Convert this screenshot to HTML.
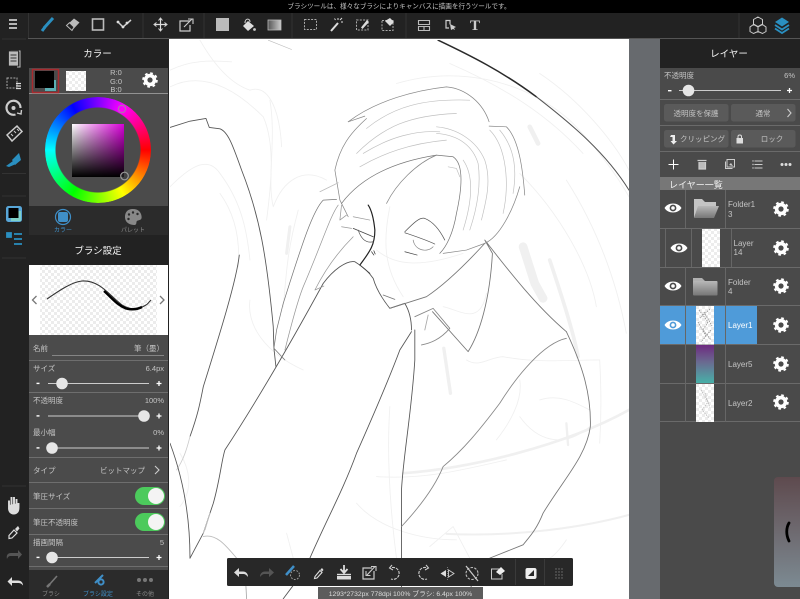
<!DOCTYPE html>
<html lang="ja"><head><meta charset="utf-8"><title>MediBang</title>
<style>
html,body{margin:0;padding:0;background:#222;width:800px;height:599px;overflow:hidden}
#s{position:absolute;left:0;top:0}
#wheel{position:absolute;left:45px;top:97px;width:106px;height:106px;border-radius:50%;background:conic-gradient(from 90deg,#f00,#ff0,#0f0,#0ff,#00f,#f0f,#f00);-webkit-mask:radial-gradient(circle,transparent 42px,#000 43px);mask:radial-gradient(circle,transparent 42px,#000 43px)}
#sq{position:absolute;left:72px;top:124px;width:52px;height:53px;background:linear-gradient(to bottom,rgba(0,0,0,0),#000),linear-gradient(to right,#fff,#d800d8)}
#o{position:absolute;left:0;top:0}
text{font-family:"Liberation Sans","Noto Sans CJK JP",sans-serif;fill:#c4c4c4;font-size:7.5px}
.sk{filter:blur(.3px)}
</style></head><body>
<svg id="s" width="800" height="599" viewBox="0 0 800 599" xmlns="http://www.w3.org/2000/svg">
<defs>
<pattern id="ck" width="6" height="6" patternUnits="userSpaceOnUse"><rect width="6" height="6" fill="#fff"/><rect width="3" height="3" fill="#ececec"/><rect x="3" y="3" width="3" height="3" fill="#ececec"/></pattern>
<linearGradient id="l5" x1="0" y1="0" x2="0" y2="1"><stop offset="0" stop-color="#6e2a80"/><stop offset=".45" stop-color="#6a6a90"/><stop offset="1" stop-color="#48b0a8"/></linearGradient>
<linearGradient id="gr" x1="0" y1="0" x2="1" y2="0"><stop offset="0" stop-color="#555"/><stop offset="1" stop-color="#ccc"/></linearGradient>
<linearGradient id="fold" x1="0" y1="0" x2="0" y2="1"><stop offset="0" stop-color="#b8b8b8"/><stop offset="1" stop-color="#777"/></linearGradient>
<linearGradient id="pv" x1="0" y1="0" x2="0" y2="1"><stop offset="0" stop-color="#5e4a4e"/><stop offset=".5" stop-color="#6e6a70"/><stop offset="1" stop-color="#7c8a92"/></linearGradient>
<g id="gear"><circle r="4.4" fill="none" stroke="#fff" stroke-width="3.6"/><circle r="6.6" fill="none" stroke="#fff" stroke-width="2.4" stroke-dasharray="2.59 2.59"/></g>
<g id="eye"><path d="M-8.5 0C-5 -6 5 -6 8.5 0C5 6 -5 6 -8.5 0Z" fill="#fff"/><circle r="3.4" fill="#4a4a4a"/><circle r="1.8" fill="#fff"/></g>
<g id="eyeb"><path d="M-8.5 0C-5 -6 5 -6 8.5 0C5 6 -5 6 -8.5 0Z" fill="#fff"/><circle r="3.4" fill="#4f9bd9"/><circle r="1.8" fill="#fff"/></g>
<g id="folder"><path d="M-12 -10H-4L-1 -7H10V-2H-8L-12 9Z" fill="#c4c4c4"/><path d="M-8 -3H13L8 9H-12Z" fill="url(#fold)"/></g>
</defs>

<!-- base -->
<rect width="800" height="599" fill="#222"/>
<rect width="800" height="13" fill="#000"/>
<text x="399" y="8.6" text-anchor="middle" style="font-size:6.6px" fill="#bbb">ブラシツールは、様々なブラシによりキャンバスに描画を行うツールです。</text>
<rect y="13" width="800" height="25" fill="#222"/>
<rect y="38" x="28" width="772" height="1" fill="#555"/>

<!-- canvas -->
<rect x="169" y="39" width="460" height="560" fill="#fff"/>
<rect x="629" y="39" width="31" height="560" fill="#676a6e"/>
<svg x="170" y="40" width="459" height="559" viewBox="0 0 1378 1677" fill="none" stroke-linecap="round" stroke-linejoin="round">
 <g class="sk">
 <g stroke="#f0f0f0" stroke-width="2.6">
  <path d="M90 0C130 70 180 130 240 150C300 130 330 220 335 320"/>
  <path d="M0 90C60 60 120 60 185 65"/>
  <path d="M0 140C100 90 200 150 280 230C320 320 300 460 290 540"/>
  <path d="M0 440C50 390 110 340 150 400C210 480 230 560 240 660"/>
  <path d="M150 460C200 530 210 610 205 680"/>
  <path d="M300 180C320 300 290 420 310 500C340 420 400 380 470 420"/>
  <path d="M240 780C230 860 290 940 400 990"/>
  <path d="M385 510C350 640 350 700 340 800"/>
  <path d="M680 130C850 80 1050 110 1200 240C1290 330 1350 420 1378 470"/>
  <path d="M840 70C1000 140 1130 220 1240 340"/>
  <path d="M1110 100C1230 180 1330 300 1378 390"/>
  <path d="M1050 400C1170 520 1260 680 1280 800"/>
  <path d="M1190 420C1280 560 1340 720 1370 880"/>
  <path d="M1290 960C1295 1050 1295 1130 1290 1210"/>
  <path d="M620 1310C760 1320 880 1290 1010 1260"/>
  <path d="M560 1390C620 1460 740 1500 860 1500"/>
  <path d="M660 1100C650 1250 660 1400 680 1555"/>
  <path d="M1050 1020C1060 1080 1020 1150 980 1200"/>
  <path d="M1110 1080C1170 1060 1220 1090 1260 1110"/>
  <path d="M890 960C930 985 960 950 1000 950C1100 970 1200 960 1290 960"/>
  <path d="M780 1520L850 1460L900 1555M1190 1500C1170 1530 1150 1550 1140 1555"/>
  <path d="M350 1480L370 1555M1050 1130C1100 1200 1180 1230 1260 1160"/>
  <path d="M30 1240C60 1290 70 1350 30 1400M660 500C640 600 640 680 700 770"/>
  <path d="M620 630C680 680 760 680 880 640"/>
  <path d="M820 800C870 810 930 860 950 760"/>
 </g>
 <g stroke="#f0f0f0" fill="none">
  <path d="M1060 620L1095 730L1120 775" stroke-width="26"/>
  <path d="M1140 660C1170 750 1210 870 1225 950" stroke-width="11"/>
  <path d="M1080 260L1105 310" stroke-width="14"/>
  <path d="M822 925L842 1060" stroke-width="10"/>
  <path d="M360 560L350 640" stroke-width="9"/>
  <path d="M700 1300C900 1285 1180 1220 1378 1110" stroke-width="8"/>
  <path d="M830 1482C1050 1492 1250 1460 1378 1425" stroke-width="6"/>
  <path d="M1190 1150L1195 1215" stroke-width="7"/>
 </g>
 <!-- top arc -->
 <path d="M805 0C900 45 1000 95 1100 170" stroke="#2a2a2a" stroke-width="4.5"/>
 <path d="M1100 170C1210 255 1310 340 1378 450" stroke="#555" stroke-width="3"/>
 <path d="M295 0L365 28" stroke="#bbb" stroke-width="1.8"/>
 <!-- left figure -->
 <g stroke="#777" stroke-width="2.6">
  <path d="M0 262L60 243L108 235L118 262L150 266C175 275 190 320 215 390C270 530 290 650 310 860L312 925L318 980" stroke="#555"/>
  <path d="M208 645C200 720 150 880 100 1040C90 1090 85 1120 60 1190" stroke="#555"/>
  <path d="M60 1190C50 1230 40 1260 20 1290" stroke="#ccc"/>
  <path d="M0 1210C30 1290 60 1400 60 1555" stroke="#555"/>
  <path d="M60 1555L100 1480L130 1390C150 1320 155 1260 165 1230C250 1100 340 950 460 730C490 690 530 660 555 665C580 680 600 700 610 715C620 750 640 780 660 805L705 790C720 815 725 840 725 870" stroke="#555"/>
  <path d="M725 875L690 930C660 1010 600 1150 560 1240C520 1350 470 1440 420 1555L369 1638L340 1677" stroke="#555"/>
  <path d="M735 870L735 960C725 1120 700 1250 695 1350L695 1677" stroke="#555"/>
  <path d="M788 815L895 935C930 880 960 780 968 640L945 600C1000 670 1090 790 1190 875"/>
  <path d="M1190 875C1230 960 1265 1050 1262 1160C1250 1250 1180 1320 1120 1420C1100 1470 1080 1490 1060 1515L960 1555L880 1677"/>
  <path d="M695 1460C760 1390 800 1330 820 1280C880 1230 930 1170 990 1090C1040 1010 1120 910 1190 895" stroke="#888"/>
  <path d="M735 830L790 805L840 865C810 900 780 910 755 915" stroke="#888"/>
  <path d="M775 825L765 870" stroke="#aaa"/>
  <path d="M660 805L770 770C830 730 890 670 945 610"/>
  <path d="M640 765L675 778"/>
  <path d="M100 1480L120 1420L105 1470" stroke="#bbb"/>
  <path d="M100 1490C140 1480 170 1520 200 1555" stroke="#bbb"/>
  <path d="M228 1640L230 1677" stroke="#aaa"/>
 </g>
 <!-- face -->
 <path d="M570 675C595 640 615 620 615 570C612 540 605 510 595 495" stroke="#222" stroke-width="3.6"/>
 <path d="M570 675L600 700" stroke="#444" stroke-width="2.6"/>
 <g stroke="#888" stroke-width="2.2">
  <path d="M535 245C620 180 740 150 830 140C890 145 940 190 958 245"/>
  <path d="M535 245L585 228"/>
  <path d="M958 258L1010 260C1050 300 1060 400 1065 465"/>
  <path d="M590 235C540 280 510 320 495 390L510 480L535 530"/>
  <path d="M515 490C560 430 640 370 800 345L850 350C880 370 880 430 860 520C850 580 830 620 810 640" stroke="#777"/>
  <path d="M650 490C680 430 740 370 800 345"/>
  <path d="M1050 440C1030 510 990 590 945 610L890 630L820 640"/>
  <path d="M450 455L505 428" stroke="#bbb"/>
 </g>
 <g stroke="#c0c0c0" stroke-width="2">
  <path d="M590 265C670 200 760 175 900 180"/>
  <path d="M560 340C640 260 720 225 860 220"/>
  <path d="M580 340C660 290 740 270 810 275"/>
  <path d="M570 380C640 340 720 310 830 300"/>
  <path d="M800 260C860 265 920 300 945 360C965 420 950 480 935 540"/>
  <path d="M800 280C870 285 910 320 925 370C935 440 920 510 900 570"/>
  <path d="M880 360C915 410 905 490 880 570"/>
  <path d="M960 270C1010 320 1020 430 1000 520"/>
  <path d="M990 270C1040 330 1040 400 1030 460"/>
  <path d="M835 380L860 385L870 410"/>
 </g>
 <g stroke="#555" stroke-width="2.2">
  <path d="M705 575C730 550 750 530 765 535C790 545 810 570 825 600"/>
  <path d="M705 578C740 590 770 600 795 612"/>
  <path d="M730 600C735 630 770 640 790 620" stroke="#888"/>
  <path d="M705 635L742 645" stroke="#444"/>
  <path d="M550 565L610 590" stroke="#444"/>
  <path d="M565 570C575 600 590 610 610 605"/>
  <path d="M550 530L600 540M515 560L545 565" stroke="#999"/>
  <path d="M515 495L510 540L530 525" stroke="#999"/>
  <path d="M605 635L612 645M612 632L616 642" stroke="#333"/>
  <path d="M500 478L460 480C430 510 400 600 340 790L320 870L312 925L345 960" stroke="#777"/>
  <path d="M505 495C480 530 460 600 400 740C380 790 360 870 345 930" stroke="#999"/>
  <path d="M550 590C500 640 460 700 435 750L462 738" stroke="#999"/>
 </g>
 </g>
</svg>

<!-- toolbar icons -->
<g fill="none" stroke="#c8c8c8" stroke-width="1.5">
 <path d="M9 20H17M9 24H17M9 28H17" stroke="#e6e6e6" stroke-width="1.4"/>
 <path d="M28.5 13V38M143 13V38M204 13V38M292 13V38M406 13V38M739 13V38" stroke="#333" stroke-width="1"/>
 <path d="M53 18L44 28" stroke="#2a8fc0" stroke-width="3"/><path d="M42 31L45 27" stroke="#2a8fc0" stroke-width="3"/>
 <path d="M66.5 25.5L74 18.5L79.5 22.5L72 30.5Z" fill="#bbb" stroke="none"/><path d="M66.5 25.5L72 30.5L74 27L69.5 22.7Z" fill="#222" stroke="#bbb" stroke-width="1"/>
 <rect x="92.5" y="19" width="11" height="11" stroke="#bbb" stroke-width="1.6"/>
 <path d="M118 22L123 27L131 20" stroke="#d0d0d0"/><circle cx="118" cy="22" r="1.4" fill="#ddd" stroke="none"/><circle cx="123" cy="27" r="1.4" fill="#ddd" stroke="none"/><circle cx="127" cy="23" r="1.4" fill="#ddd" stroke="none"/>
 <path d="M160.5 19V30M155 24.5H166" stroke="#ddd" stroke-width="1.2"/><path d="M158.5 20.5L160.5 18L162.5 20.5M158.5 28.5L160.5 31L162.5 28.5M156.5 22.5L154 24.5L156.5 26.5M164.5 22.5L167 24.5L164.5 26.5" stroke="#ddd" stroke-width="1"/>
 <path d="M190 21H180V31H190V25" stroke="#ccc" stroke-width="1.2"/><path d="M184 27L192 19M188 19H193V24" stroke="#ccc" stroke-width="1.1"/>
 <rect x="216" y="18" width="13" height="13" fill="#bbb" stroke="none"/>
 <path d="M243 26L248 21L254 26L248 31Z" fill="#ddd" stroke="none"/><path d="M245 23C245 18 250 18 250 22" stroke="#ccc" stroke-width="1.1"/><circle cx="254.5" cy="29.5" r="1.4" fill="#ccc" stroke="none"/>
 <rect x="268" y="20" width="13" height="10" fill="url(#gr)" stroke="#bbb" stroke-width=".8"/>
 <g stroke-dasharray="2 1.3" stroke="#aaa" stroke-width="1"><rect x="304.5" y="19.5" width="12" height="10"/><path d="M356.5 20H368V30H356.5Z"/><path d="M382 20.5H393V30.5H382Z"/></g>
 <path d="M331 31L338 23" stroke="#ddd" stroke-width="2"/><path d="M338 20V18M341 22H343M340 20L342 18M335.5 20L334.5 18.5" stroke="#ddd" stroke-width="1"/>
 <path d="M361 27.5L367 20L369 22L362.5 29Z" fill="#ddd" stroke="none"/>
 <path d="M385 21L390 18L394 22L390 26Z" fill="#ddd" stroke="none"/>
 <path d="M418.5 20.5H429.5V24.5H418.5ZM418.5 26.500H429.5V30.5H418.5ZM424 26.5V30.5" stroke="#bbb" stroke-width="1.1"/>
 <path d="M450 24.5V20.5H446V28H449" stroke="#ccc" stroke-width="1.2"/><path d="M450 24L456 27L454 28L455 30L453 29L451 30Z" fill="#ccc" stroke="none"/>
 <path d="M758 18.5L762.5 21V25.5L758 28L753.5 25.5V21ZM753.5 26L758 28.5V33L753.5 35L750 33V28.5ZM762.5 26L766 28.5V33L762.5 35L758 33V28.5Z" stroke="#ccc" stroke-width="1" transform="translate(0,-1.5)"/>
</g>
<text x="475" y="30" text-anchor="middle" style="font-size:15px;font-family:'Liberation Serif',serif;font-weight:bold;fill:#ccc">T</text>
<path d="M782 17.5L789 22L782 26.5L775 22Z" fill="#2a8fc0"/><path d="M775 25L782 29.5L789 25" fill="none" stroke="#2a8fc0" stroke-width="1.8"/><path d="M775 28.5L782 33L789 28.5" fill="none" stroke="#2a8fc0" stroke-width="1.8"/>

<!-- sidebar -->
<rect x="0" y="39" width="28" height="560" fill="#222"/>
<path d="M2 39H26M2 173.5H26M2 196H26M2 258H26M2 486H26" stroke="#333" stroke-width="1"/>
<g fill="none" stroke="#c0c0c0">
 <path d="M11 54V51H20V67H17" stroke-width="1"/><rect x="8.5" y="51" width="10" height="15" fill="#bbb" stroke="#222" stroke-width=".8"/>
 <path d="M10.5 55H16.5M10.5 58H16.5M10.5 61H16.5" stroke="#333" stroke-width="1"/>
 <path d="M7 78H17V88H7Z" stroke-dasharray="2 1.2" stroke-width="1" stroke="#aaa"/><path d="M16 83.5H21M16 86H21M16 88.5H21" stroke="#ddd" stroke-width="1.2"/>
 <path d="M20.5 108A7 7 0 1 0 15.5 114.5" stroke="#ccc" stroke-width="2.2"/><circle cx="13.5" cy="108" r="2" fill="#ccc" stroke="none"/><path d="M17 113L21 114L21.5 110" stroke="#ccc" stroke-width="1.4"/>
 <path d="M7 135L17 126L22 131.5L12 141Z" stroke="#ccc" stroke-width="1.5"/><path d="M11 134L13 136M14 131L16 133M17 129L19 131" stroke="#ccc" stroke-width="1"/>
</g>
<path d="M12 160L19 153L21 160L15 165Z" fill="#2a8fc0"/><path d="M6 166L13 161L16 164L9 167Z" fill="#2a8fc0"/>
<rect x="6" y="206" width="16" height="16" rx="2.5" fill="#58a6d8"/><rect x="11" y="211" width="10" height="10" fill="#7fd0c8"/><rect x="8.5" y="208" width="10" height="10" fill="#000"/>
<path d="M7 233H11V237H7ZM14 234H22M14 239H22M14 244H22" fill="#2a8fc0" stroke="#2a8fc0" stroke-width="1.8"/>
<path d="M9 508V500.5M11.5 507V497M14 507V497M16.5 508V499M9 505L9 509C9.5 513 13 514.5 16 513C19 511.5 18.5 508 18.5 503" stroke="#ddd" stroke-width="1.9" fill="#ddd"/>
<path d="M9 535.5L14 530L17 533L12 538L9 538.5Z" fill="none" stroke="#ddd" stroke-width="1.2"/><path d="M15 529L18 526L19.5 528.5L17 531.5Z" fill="#ddd"/>
<path d="M20 553H13C10 553 8 555 9 559C10 556.5 11 556 13 556H20V559L24 554.5L20 550Z" fill="#555" transform="translate(-2,0)"/>
<path d="M8 581H14C17 581 19 583 19 586C17.5 584 16 583.5 14 583.5H8V586.5L3.5 582L8 577.5Z" fill="#e0e0e0" transform="translate(4,-.5)"/>

<!-- left panel -->
<rect x="28" y="39" width="140" height="560" fill="#222"/>
<text x="97.5" y="57" text-anchor="middle" style="font-size:9.5px;fill:#f4f4f4">カラー</text>
<rect x="29" y="68" width="139" height="138" fill="#4b4b4b"/>
<path d="M29 93.5H168" stroke="#aaa" stroke-width=".8"/>
<rect x="32.5" y="69.5" width="26" height="23" fill="none" stroke="#a82a2e" stroke-width="1.5"/>
<rect x="45" y="80" width="11" height="11" fill="#5ab0b4"/>
<rect x="35" y="71" width="19" height="17" fill="#000"/>
<rect x="66" y="71" width="20" height="20" fill="url(#ck)"/>
<text x="116" y="75" text-anchor="middle">R:0</text><text x="116" y="84" text-anchor="middle">G:0</text><text x="116" y="92" text-anchor="middle">B:0</text>
<use href="#gear" x="150" y="80"/>
<rect x="29" y="206" width="139" height="29" fill="#2b2b2b"/>
<circle cx="63" cy="217" r="7.5" fill="none" stroke="#3f8fc8" stroke-width="1.2"/><rect x="58" y="212" width="10" height="10" rx="2" fill="#3f8fc8"/>
<text x="63" y="232" text-anchor="middle" style="font-size:6px;fill:#3f8fc8">カラー</text>
<path d="M133 209C126 209 125 214 125 217C125 222 129 225 134 225C138 225 135 221 138 220.5C141 220 142 219 141.5 216C141 212 138 209 133 209Z" fill="#888"/>
<g fill="#2b2b2b"><circle cx="129" cy="214.5" r="1.2"/><circle cx="133" cy="212.5" r="1.2"/><circle cx="137.5" cy="214" r="1.2"/><circle cx="128.5" cy="219" r="1.2"/></g>
<text x="133" y="232" text-anchor="middle" style="font-size:6px;fill:#888">パレット</text>

<text x="98" y="254" text-anchor="middle" style="font-size:9.5px;fill:#f4f4f4">ブラシ設定</text>
<rect x="29" y="265" width="139" height="70" fill="#fff"/>
<rect x="40" y="265" width="117" height="70" fill="url(#ck)"/>
<path d="M47 299C60 290 72 282 82 281C100 280 110 296 122 305C130 310 138 310 146 305C148 304 148 303 151 300" fill="none" stroke="#333" stroke-width="1.1"/>
<path d="M104 291C112 298 117 305 126 308.500C132 310 138 309 142 307" fill="none" stroke="#000" stroke-width="2.4"/>
<path d="M36.500 296L32.500 300L36.500 304" fill="none" stroke="#777" stroke-width="1.3"/>
<path d="M160 296L164 300L160 304" fill="none" stroke="#777" stroke-width="1.3"/>
<rect x="29" y="335" width="139" height="235" fill="#4b4b4b"/>
<text x="33" y="351">名前</text><text x="164" y="351" text-anchor="end">筆（墨）</text>
<path d="M52 355.5H164" stroke="#999" stroke-width=".8"/>
<path d="M29 360.5H168M29 392.5H168M29 457.5H168M29 482.5H168M29 508.5H168M29 534.5H168M29 566.5H168" stroke="#6e6e6e" stroke-width="1"/>

<text x="33" y="371">サイズ</text><text x="164" y="371" text-anchor="end">6.4px</text>
<path d="M48 383.5H149" stroke="#ccc" stroke-width="1"/><circle cx="62" cy="383.5" r="5.8" fill="#e6e6e6"/>
<text x="33" y="403">不透明度</text><text x="164" y="403" text-anchor="end">100%</text>
<path d="M48 416H149" stroke="#ccc" stroke-width="1"/><circle cx="144" cy="416" r="5.8" fill="#e6e6e6"/>
<text x="33" y="435">最小幅</text><text x="164" y="435" text-anchor="end">0%</text>
<path d="M48 448H149" stroke="#ccc" stroke-width="1"/><circle cx="52" cy="448" r="5.8" fill="#e6e6e6"/>
<text x="33" y="473">タイプ</text><text x="145" y="473" text-anchor="end">ビットマップ</text>
<path d="M155 466L159 470L155 474" fill="none" stroke="#ccc" stroke-width="1.1"/>
<text x="33" y="499">筆圧サイズ</text>
<rect x="135" y="487" width="30" height="18" rx="9" fill="#4cca5c"/><circle cx="156" cy="496" r="8" fill="#f4f4f4"/>
<text x="33" y="525">筆圧不透明度</text>
<rect x="135" y="513" width="30" height="18" rx="9" fill="#4cca5c"/><circle cx="156" cy="522" r="8" fill="#f4f4f4"/>
<text x="33" y="545">描画間隔</text><text x="164" y="545" text-anchor="end">5</text>
<path d="M48 557.5H149" stroke="#ccc" stroke-width="1"/><circle cx="52" cy="557.5" r="5.8" fill="#e6e6e6"/>
<g fill="#fff"><rect x="36.5" y="382.7" width="3" height="1.4"/><rect x="36.5" y="415.2" width="3" height="1.4"/><rect x="36.5" y="447.2" width="3" height="1.4"/><rect x="36.5" y="556.7" width="3" height="1.4"/>
<path d="M156.5 383.5h5M159 381v5M156.5 416h5M159 413.5v5M156.5 448h5M159 445.5v5M156.5 557.5h5M159 555v5" stroke="#fff" stroke-width="1.3"/></g>
<rect x="29" y="570" width="139" height="29" fill="#2b2b2b"/>
<path d="M57 576L49 585" stroke="#777" stroke-width="1.6"/><path d="M47 587L50 584" stroke="#777" stroke-width="2.5"/>
<text x="51" y="596" text-anchor="middle" style="font-size:6px;fill:#888">ブラシ</text>
<path d="M103 575L95 583" stroke="#3f8fc8" stroke-width="2"/><circle cx="101" cy="582" r="2.6" fill="none" stroke="#3f8fc8" stroke-width="2"/>
<text x="98" y="596" text-anchor="middle" style="font-size:6px;fill:#3f8fc8">ブラシ設定</text>
<circle cx="139" cy="580" r="2" fill="#777"/><circle cx="145" cy="580" r="2" fill="#777"/><circle cx="151" cy="580" r="2" fill="#777"/>
<text x="145" y="596" text-anchor="middle" style="font-size:6px;fill:#888">その他</text>

<!-- right panel -->
<rect x="660" y="39" width="140" height="560" fill="#4a4a4a"/>
<rect x="660" y="39" width="140" height="29" fill="#222"/>
<text x="729" y="57" text-anchor="middle" style="font-size:9.5px;fill:#f4f4f4">レイヤー</text>
<text x="664" y="78">不透明度</text><text x="795" y="78" text-anchor="end">6%</text>
<path d="M679 90.5H781" stroke="#ccc"/><circle cx="688.5" cy="90.5" r="5.8" fill="#e6e6e6"/>
<rect x="668" y="90" width="3.5" height="1.4" fill="#fff"/><path d="M787 90.5h5M789.5 88v5" stroke="#fff" stroke-width="1.3"/>
<path d="M660 99.5H800M660 125.5H800M660 151.5H800" stroke="#6a6a6a"/>
<rect x="664" y="104" width="64.5" height="17.5" rx="2.5" fill="#5a5a5a"/><rect x="731" y="104" width="64.5" height="17.5" rx="2.5" fill="#5a5a5a"/>
<rect x="664" y="130" width="64.5" height="17.5" rx="2.5" fill="#5a5a5a"/><rect x="731" y="130" width="64.5" height="17.5" rx="2.5" fill="#5a5a5a"/>
<text x="696" y="116" text-anchor="middle">透明度を保護</text><text x="763" y="116" text-anchor="middle">通常</text>
<path d="M787.5 109L791 113L787.5 117" fill="none" stroke="#ccc" stroke-width="1.1"/>
<path d="M671 135H675V141H677L673.5 144.5L670.5 141H672.5V137H670Z" fill="#eee"/>
<text x="680" y="141.5">クリッピング</text>
<rect x="736.5" y="138" width="6.5" height="5.5" fill="#ddd"/><path d="M738 138V136.5C738 134.5 741.5 134.5 741.5 136.5V138" fill="none" stroke="#ddd"/>
<text x="772" y="141.5" text-anchor="middle">ロック</text>
<path d="M673.5 159.5V169.5M668.5 164.5H678.5" stroke="#fff" stroke-width="1"/>
<path d="M697.5 160.5H706.5M699 162V169H705.500V162" fill="#bbb" stroke="#ccc" stroke-width="1.2"/>
<rect x="727" y="159.5" width="7.5" height="7.5" fill="none" stroke="#ccc"/><path d="M725.5 161.5V168.5H732.5" fill="none" stroke="#ccc"/><path d="M729 165L731 163L733 166Z" fill="#ccc"/>
<path d="M754.5 161H762.5M754.5 164.5H762.5M754.5 168H762.5" stroke="#ccc"/><circle cx="753" cy="161" r=".7" fill="#ccc"/><circle cx="753" cy="164.5" r=".7" fill="#ccc"/><circle cx="753" cy="168" r=".7" fill="#ccc"/>
<circle cx="782" cy="164.5" r="1.5" fill="#ddd"/><circle cx="786" cy="164.5" r="1.5" fill="#ddd"/><circle cx="790" cy="164.5" r="1.5" fill="#ddd"/>
<rect x="660" y="177" width="140" height="13" fill="#777"/>
<text x="669" y="188" style="font-size:9px;fill:#f4f4f4">レイヤー一覧</text>

<!-- layer rows -->
<rect x="660" y="306" width="97" height="38.5" fill="#4f9bd9"/>
<path d="M660 228.5H800M660 267.5H800M660 305.500H800M660 344.500H800M660 383.500H800M660 421.500H800" stroke="#6a6a6a"/>
<path d="M685.5 190V228M725.5 190V228M665.5 229V267M691.5 229V267M731.5 229V267M685.5 267V422M725.5 267V422" stroke="#666"/>
<use href="#eye" x="673" y="208"/><use href="#folder" x="706" y="209"/>
<text x="728" y="207" style="font-size:8px">Folder1</text><text x="728" y="217" style="font-size:8px">3</text><use href="#gear" x="781" y="209"/>
<use href="#eye" x="679" y="248"/><rect x="702" y="229" width="18" height="38" fill="url(#ck)"/>
<text x="733.5" y="246" style="font-size:8px">Layer</text><text x="733.5" y="255" style="font-size:8px">14</text><use href="#gear" x="781" y="248"/>
<use href="#eye" x="673" y="286"/><path d="M693 278H702L705 281H717V287H693Z" fill="#b0b0b0"/><rect x="693" y="281" width="24.5" height="14.5" rx="1" fill="url(#fold)"/>
<text x="728" y="285" style="font-size:8px">Folder</text><text x="728" y="294" style="font-size:8px">4</text><use href="#gear" x="781" y="286"/>
<use href="#eyeb" x="673" y="325"/><rect x="696" y="306" width="18" height="38.5" fill="url(#ck)"/>
<path d="M699 310L708 322L703 330L711 340M704 312L712 326M698 322L706 336M710 309L700 318M711 330L701 342" fill="none" stroke="#999" stroke-width=".9" stroke-dasharray="1.5 1"/>
<text x="728" y="328" style="font-size:8px;fill:#fff">Layer1</text><use href="#gear" x="781" y="325"/>
<rect x="696" y="345" width="18" height="38" fill="url(#l5)"/>
<text x="728" y="367" style="font-size:8px">Layer5</text><use href="#gear" x="781" y="364"/>
<rect x="696" y="384" width="18" height="38" fill="url(#ck)"/>
<path d="M701 390L708 402L702 410L709 418M705 393L710 408" fill="none" stroke="#bbb" stroke-width=".9" stroke-dasharray="1.5 1"/>
<text x="728" y="406" style="font-size:8px">Layer2</text><use href="#gear" x="781" y="402"/>

<!-- brush preview popup -->
<rect x="774" y="477" width="34" height="110" rx="4" fill="url(#pv)"/>
<path d="M789 523C786 528 786 535 789 541" fill="none" stroke="#000" stroke-width="2.8" stroke-linecap="round"/>

<!-- bottom toolbar -->
<rect x="227" y="558" width="346" height="28" rx="1.5" fill="#282828"/>
<path d="M236 572.5H243C246 572.5 248 574.5 248 578C246 575.5 245 575 243 575H239V578L234 573.5L239 569V572.5Z" fill="#ddd" transform="translate(0,-1)"/>
<path d="M272 572.5H265C262 572.5 260 574.5 260 578C262 575.5 263 575 265 575H269V578L274 573.5L269 569V572.5Z" fill="#555" transform="translate(0,-1)"/>
<path d="M294 566L286 575" stroke="#3f8fc8" stroke-width="2.5"/><circle cx="295" cy="575" r="4.5" fill="none" stroke="#999" stroke-dasharray="1.8 1.4"/>
<path d="M315 576.5L320 570.5L322 572.5L317 578L314.5 578.5Z" fill="none" stroke="#ddd" stroke-width="1.1"/><path d="M320.5 569.5L322 568L323.5 570L322 571.5Z" fill="#ddd"/>
<path d="M344 565V571.5M340.5 569L344 573L347.5 569" fill="none" stroke="#ddd" stroke-width="1.8"/><path d="M337 574.5H351" stroke="#ddd" stroke-width="1.4"/><rect x="337" y="576" width="14" height="3.5" fill="#ddd"/>
<path d="M372 568H363V579H374V571" fill="none" stroke="#ccc" stroke-width="1.2"/><path d="M367 575L375 566.5M371 566.5H376V571M366 571V575.5H370.5" fill="none" stroke="#ccc" stroke-width="1.1"/>
<g fill="none" stroke="#ccc" stroke-width="1.1"><path d="M392 567.5A6 6 0 1 1 391 579" stroke-dasharray="3 1"/><path d="M392 565L389.5 568L393 570"/><path d="M426 567.5A6 6 0 1 0 427 579" stroke-dasharray="3 1"/><path d="M426 565L428.5 568L425 570"/></g>
<path d="M446 570V577L440.5 573.5Z" fill="#ddd"/><path d="M448.5 570V577L454 573.5Z" fill="none" stroke="#ccc" stroke-width=".9"/><path d="M447.3 567V580" stroke="#aaa" stroke-width=".6" stroke-dasharray="1 1"/>
<circle cx="472" cy="573.5" r="6" fill="none" stroke="#bbb" stroke-dasharray="2.5 1.3" stroke-width="1.1"/><path d="M466 566L478 581" stroke="#ccc" stroke-width="1.2"/>
<path d="M500 569H491.5V579H502V574" fill="none" stroke="#ccc"/><path d="M496 572L501 567L505 571L500 575Z" fill="#eee"/>
<path d="M515.5 559V585M544.5 559V585" stroke="#3a3a3a"/>
<rect x="525.5" y="568" width="11" height="11" rx="2" fill="#eee"/><path d="M528 576L534 570V576Z" fill="#282828"/>
<g fill="#777"><circle cx="556" cy="569" r=".7"/><circle cx="559" cy="569" r=".7"/><circle cx="562" cy="569" r=".7"/><circle cx="556" cy="572" r=".7"/><circle cx="559" cy="572" r=".7"/><circle cx="562" cy="572" r=".7"/><circle cx="556" cy="575" r=".7"/><circle cx="559" cy="575" r=".7"/><circle cx="562" cy="575" r=".7"/><circle cx="556" cy="578" r=".7"/><circle cx="559" cy="578" r=".7"/><circle cx="562" cy="578" r=".7"/></g>
<rect x="318" y="587" width="165" height="12" fill="#5c5c5c"/>
<text x="400.5" y="596" text-anchor="middle" style="font-size:6.8px;fill:#ddd">1293*2732px 778dpi 100% ブラシ: 6.4px 100%</text>
</svg>
<div id="wheel"></div>
<div id="sq"></div>
<svg id="o" width="800" height="599" viewBox="0 0 800 599" style="pointer-events:none">
<circle cx="122" cy="109" r="3.6" fill="none" stroke="#b070b0" stroke-width="1.2"/>
<circle cx="124.5" cy="176" r="3.8" fill="#3a3a3a" fill-opacity=".5" stroke="#999" stroke-width="1.2"/>
</svg>
</body></html>
